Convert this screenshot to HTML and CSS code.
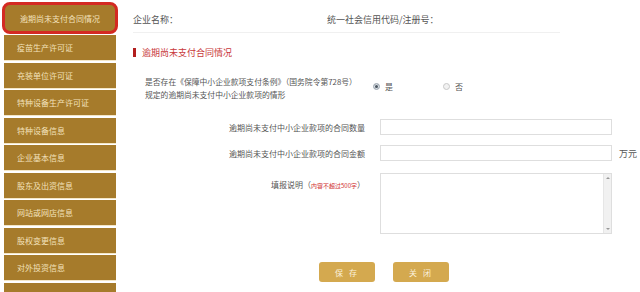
FILE: index.html
```html
<html>
<head>
<meta charset="UTF-8">
<title>逾期尚未支付合同情况</title>
<link rel="stylesheet" href="styles.css">
</head>
<body>
<div class="page">
    <div class="sidebar">
        <a href="javascript:;" class="item active">逾期尚未支付合同情况</a>
        <a href="javascript:;" class="item">疫苗生产许可证</a>
        <a href="javascript:;" class="item">充装单位许可证</a>
        <a href="javascript:;" class="item">特种设备生产许可证</a>
        <a href="javascript:;" class="item">特种设备信息</a>
        <a href="javascript:;" class="item">企业基本信息</a>
        <a href="javascript:;" class="item">股东及出资信息</a>
        <a href="javascript:;" class="item">网站或网店信息</a>
        <a href="javascript:;" class="item">股权变更信息</a>
        <a href="javascript:;" class="item">对外投资信息</a>
        <a href="javascript:;" class="item">&nbsp;</a>
    </div>

    <div class="main">
        <div class="header">
            <span class="company">企业名称：</span>
            <span class="code">统一社会信用代码/注册号：</span>
        </div>

        <h3 class="title"><span class="bar"></span>逾期尚未支付合同情况</h3>

        <div class="question">
            <div class="question_text">是否存在《保障中小企业款项支付条例》（国务院令第728号）<br>规定的逾期尚未支付中小企业款项的情形</div>
            <label class="radio checked"><span class="dot"></span>是</label>
            <label class="radio"><span class="dot"></span>否</label>
        </div>

        <div class="row first">
            <div class="label">逾期尚未支付中小企业款项的合同数量</div>
            <div class="field"><input type="text"></div>
        </div>
        <div class="row">
            <div class="label">逾期尚未支付中小企业款项的合同金额</div>
            <div class="field"><input type="text"></div>
            <span class="unit">万元</span>
        </div>
        <div class="row tall">
            <div class="label">填报说明（<span class="hint">内容不超过500字</span>）</div>
            <div class="field area">
                <div class="textarea"></div>
                <div class="scrollbar"><span class="up"></span><span class="down"></span></div>
            </div>
        </div>

        <div class="buttons">
            <a href="javascript:;" class="btn">保 存</a>
            <a href="javascript:;" class="btn">关 闭</a>
        </div>
    </div>
</div>
</body>
</html>
```

FILE: styles.css
```css
/*
brown: #a67b2b;
cream: #f3e2bc;
gold: #d3a84e;
red: #c8282a;
*/
body {
    margin: 0;
    font-family: "Noto Sans CJK SC", "Noto Sans", sans-serif;
    color: #555;
    background: #fff;
    font-size: 8px;
}

* {
    box-sizing: border-box;
}

.page {
    display: flex;
    height: 292px;
    overflow: hidden;
}

.sidebar {
    flex: 0 0 120px;
    padding: 2px 0 0 2px;
    display: flex;
    flex-direction: column;
}

.sidebar .item {
    display: flex;
    align-items: center;
    flex: 0 0 26px;
    width: 112px;
    margin: 0 0 1.5px 2px;
    padding-left: 13px;
    background: #a67b2b;
    color: #f3e2bc;
    text-decoration: none;
    font-size: 8px;
    border-bottom: 1px solid #f4e6c6;
}

.sidebar .item.active {
    flex: 0 0 32px;
    width: 116px;
    margin: 0 0 1px 0;
    padding: 0;
    justify-content: center;
    border: 3px solid #d42a22;
    border-radius: 8px;
}

.main {
    flex: 1 1 auto;
    padding-left: 13px;
}

.header {
    display: flex;
    height: 33px;
    padding-top: 13px;
    font-size: 9px;
    color: #555;
    border-bottom: 1px solid #f0f0f0;
    margin-right: 80px;
}

.header .company {
    flex: 0 0 194px;
}

.title {
    margin: 12px 0 0 0;
    font-size: 9px;
    font-weight: normal;
    color: #c8383a;
    display: flex;
    align-items: center;
    height: 14px;
}

.title .bar {
    display: inline-block;
    width: 3px;
    height: 9px;
    background: #b21e1e;
    margin-right: 6px;
}

.question {
    display: flex;
    align-items: center;
    margin-top: 16px;
    padding-left: 12px;
}

.question_text {
    flex: 0 0 228px;
    line-height: 13px;
    font-size: 7.8px;
}

.radio {
    display: flex;
    align-items: center;
    flex: 0 0 70px;
    font-size: 8px;
    margin-top: -4px;
}

.radio .dot {
    display: inline-block;
    width: 7px;
    height: 7px;
    border-radius: 50%;
    border: 1px solid #c8c8c8;
    background: #f2f2f2;
    margin-right: 5px;
}

.radio.checked .dot {
    background: #4a5560;
    border-color: #b8c0c8;
    box-shadow: inset 0 0 0 1px #dfe5ea;
}

.row {
    display: flex;
    align-items: center;
    margin-top: 10px;
    height: 16px;
}

.row.first {
    margin-top: 18px;
}

.row .label {
    flex: 0 0 232px;
    text-align: right;
    font-size: 8px;
}

.row .field {
    margin-left: 15px;
    width: 232px;
    height: 16px;
    border: 1px solid #dedede;
}

.row .field input {
    width: 100%;
    height: 100%;
    border: none;
    outline: none;
}

.row .unit {
    margin-left: 7px;
    font-size: 9px;
}

.row.tall {
    height: 60px;
    align-items: flex-start;
    margin-top: 12px;
}

.row.tall .label {
    padding-top: 6px;
}

.row .hint {
    color: #d03030;
    font-size: 6px;
}

.row .field.area {
    height: 61px;
    display: flex;
}

.area .textarea {
    flex: 1 1 auto;
}

.area .scrollbar {
    flex: 0 0 8px;
    background: #f1f1f1;
    border-left: 1px solid #e6e6e6;
    display: flex;
    flex-direction: column;
    justify-content: space-between;
    align-items: center;
    padding: 3px 0;
}

.area .scrollbar span {
    width: 0;
    height: 0;
    border-left: 2px solid transparent;
    border-right: 2px solid transparent;
}

.area .scrollbar .up {
    border-bottom: 2px solid #999;
}

.area .scrollbar .down {
    border-top: 2px solid #999;
}

.buttons {
    display: flex;
    margin: 29px 0 0 186px;
}

.btn {
    display: flex;
    align-items: center;
    justify-content: center;
    width: 56px;
    height: 20px;
    margin-right: 18px;
    background: #d4a94f;
    color: #fbf1dc;
    border-radius: 3px;
    text-decoration: none;
    font-size: 8px;
    letter-spacing: 2px;
}
```
